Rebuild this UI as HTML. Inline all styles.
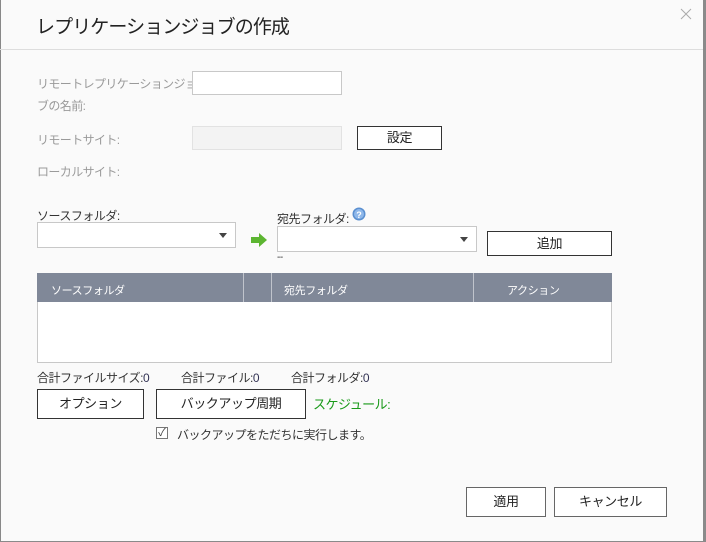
<!DOCTYPE html>
<html><head><meta charset="utf-8"><style>
*{box-sizing:border-box;margin:0;padding:0}
body{width:706px;height:542px;background:#8a8a8a;position:relative;overflow:hidden;font-family:"Liberation Sans","Noto Sans CJK JP",sans-serif;}
.dlg{position:absolute;left:0;top:0;width:703px;height:541px;background:#fafafa;}
.a{position:absolute;white-space:nowrap}
.lbl{color:#9a9a9a;font-size:12px;letter-spacing:-0.6px}
.dk{color:#333;font-size:12px;letter-spacing:-0.5px}
.in{position:absolute;border:1px solid #c8c8c8;background:#fff}
.btn{position:absolute;border:1px solid #333;background:#fff;font-size:13px;color:#222;text-align:center;letter-spacing:-0.4px}
.sel{position:absolute;border:1px solid #c8c8c8;background:#fff}
.sel:after{content:"";position:absolute;right:8px;top:10px;border:4px solid transparent;border-top:5px solid #444}
.th{position:absolute;color:#fff;font-size:11px;letter-spacing:-0.4px}
</style></head><body>
<div class="dlg">
<div class="a" style="left:0;top:0;width:1px;height:541px;background:#888"></div>
<div class="a" style="left:36px;top:12px;font-size:19px;color:#222;letter-spacing:-0.9px">レプリケーションジョブの作成</div>
<svg class="a" style="left:680px;top:8px" width="12" height="12"><path d="M1 1L11 11M11 1L1 11" stroke="#aaa" stroke-width="1"/></svg>
<div class="a" style="left:0;top:49px;width:703px;height:1px;background:#ddd"></div>
<div class="a lbl" style="left:37px;top:75px">リモートレプリケーションジョ</div>
<div class="a lbl" style="left:37px;top:97px">ブの名前:</div>
<div class="in" style="left:192px;top:71px;width:150px;height:24px"></div>
<div class="a lbl" style="left:37px;top:131px">リモートサイト:</div>
<div class="in" style="left:192px;top:126px;width:150px;height:24px;background:#f3f3f3;border-color:#e2e2e2"></div>
<div class="btn" style="left:357px;top:126px;width:85px;height:24px;line-height:22px">設定</div>
<div class="a lbl" style="left:37px;top:163px">ローカルサイト:</div>
<div class="a dk" style="left:37px;top:207px">ソースフォルダ:</div>
<div class="sel" style="left:37px;top:222px;width:199px;height:26px"></div>
<svg class="a" style="left:249px;top:232px" width="20" height="16"><path d="M2 5h8V1l8 7-8 7v-4H2z" fill="#5cb531"/></svg>
<div class="a dk" style="left:277px;top:210px">宛先フォルダ:</div>
<svg class="a" style="left:352px;top:207px" width="14" height="14"><circle cx="7" cy="7" r="6.5" fill="#5a8fd0"/><circle cx="7" cy="7" r="5" fill="#8fb8ea"/><text x="7" y="11" font-size="9" font-weight="bold" fill="#fff" text-anchor="middle" font-family="Liberation Sans">?</text></svg>
<div class="sel" style="left:277px;top:226px;width:200px;height:26px"></div>
<div class="btn" style="left:487px;top:231px;width:125px;height:25px;line-height:23px">追加</div>
<div class="a dk" style="left:277px;top:252px;font-size:10px">--</div>
<div class="a" style="left:37px;top:273px;width:575px;height:90px;border:1px solid #c8c8c8;background:#fff"></div>
<div class="a" style="left:37px;top:273px;width:575px;height:29px;background:#808898"></div>
<div class="a" style="left:243px;top:273px;width:1px;height:29px;background:#c0c4cc"></div>
<div class="a" style="left:271px;top:273px;width:1px;height:29px;background:#c0c4cc"></div>
<div class="a" style="left:473px;top:273px;width:1px;height:29px;background:#c0c4cc"></div>
<div class="th" style="left:51px;top:282px">ソースフォルダ</div>
<div class="th" style="left:284px;top:282px">宛先フォルダ</div>
<div class="th" style="left:507px;top:282px">アクション</div>
<div class="a dk" style="left:37px;top:369px">合計ファイルサイズ:<span style="color:#335">0</span></div>
<div class="a dk" style="left:181px;top:369px">合計ファイル:<span style="color:#335">0</span></div>
<div class="a dk" style="left:291px;top:369px">合計フォルダ:<span style="color:#335">0</span></div>
<div class="btn" style="left:37px;top:389px;width:107px;height:30px;line-height:28px">オプション</div>
<div class="btn" style="left:156px;top:389px;width:150px;height:30px;line-height:28px">バックアップ周期</div>
<div class="a" style="left:313px;top:394px;font-size:13px;color:#1a9a1a;letter-spacing:-0.5px">スケジュール:</div>
<div class="a" style="left:156px;top:427px;width:12px;height:12px;border:1px solid #777;background:#fff;font-size:11px;line-height:10px;color:#444;text-align:center">✓</div>
<div class="a dk" style="left:177px;top:426px">バックアップをただちに実行します。</div>
<div class="btn" style="left:466px;top:487px;width:80px;height:30px;line-height:28px;border-color:#666">適用</div>
<div class="btn" style="left:554px;top:487px;width:113px;height:30px;line-height:28px;border-color:#666">キャンセル</div>
</div>
</body></html>
